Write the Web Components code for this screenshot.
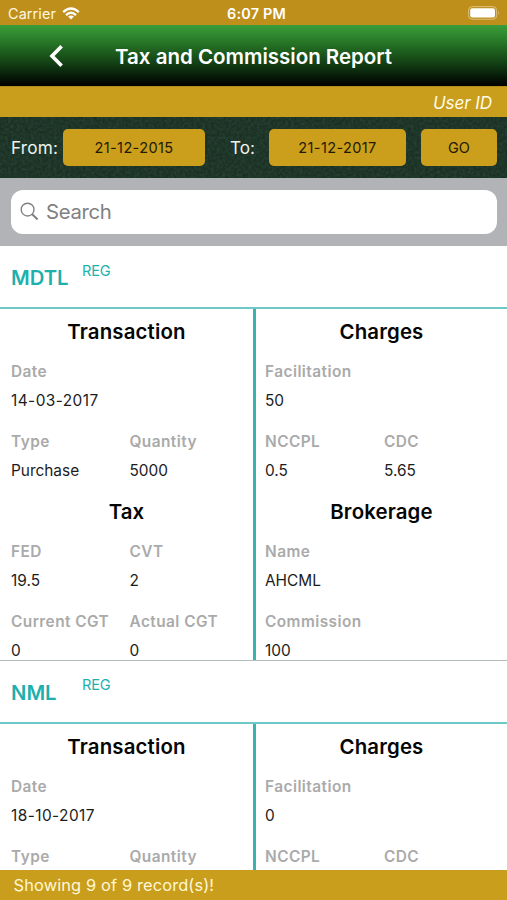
<!DOCTYPE html>
<html lang="en">
<head>
<meta charset="utf-8">
<title>Tax and Commission Report</title>
<style>
html,body{margin:0;height:100%;overflow:hidden;background:#fff}
body{font-family:Inter,"Liberation Sans",sans-serif}
</style>
</head>
<body>
<report-app></report-app>
<script>
function define(name, render) {
  customElements.define(name, class extends HTMLElement {
    connectedCallback() {
      if (this.shadowRoot) return;
      this.attachShadow({ mode: 'open' }).innerHTML = render(this);
    }
  });
}

define('status-bar', () => `
<style>
:host{display:grid;grid-template-columns:1fr auto 1fr;align-items:center;height:25px;background:#be8f1b;color:#fff8e0;font-size:14.4px;line-height:25px;padding:2px 7px 0 8px;box-sizing:border-box}
.l{display:flex;align-items:center;gap:6px;letter-spacing:.12px}
.c{font-weight:600;letter-spacing:.2px;color:#fff;padding-left:5px}
.r{display:flex;justify-content:flex-end}
svg{display:block}
.r svg{margin-top:-2px}
.l svg{margin-top:-2px}
.l span,.c{margin-top:-1px}
</style>
<div class="l"><span>Carrier</span>
<svg width="18" height="13" viewBox="0 0 18 13"><g fill="none" stroke="#fff" stroke-width="2.3"><path d="M1.2 5.1Q9-2.2 16.8 5.1"/><path d="M4 8.1Q9 3.4 14 8.1"/></g><path d="M9 12.6L6.1 9.6Q9 7.4 11.9 9.6Z" fill="#fff"/></svg></div>
<span class="c">6:07 PM</span>
<div class="r"><svg width="32" height="14" viewBox="0 0 32 14"><rect x=".6" y=".6" width="28" height="12.6" rx="3.6" fill="none" stroke="#ddc17d" stroke-width="1"/><rect x="2.2" y="2.2" width="24.8" height="9.4" rx="2" fill="#fff"/><path d="M30 4.8q1.6 2 0 4z" fill="#ddc17d"/></svg></div>`);

define('nav-bar', () => `
<style>
:host{display:grid;grid-template-columns:115px 1fr 115px;align-items:center;height:61px;background:linear-gradient(#3c9d3b 0,#2c832c 20%,#1b571b 48%,#0c2b0e 75%,#010401 97%,#000 100%);color:#fff}
svg{display:block;margin-left:48px}
h1{margin:0;font-size:20.5px;font-weight:600;text-align:center;white-space:nowrap;letter-spacing:0;line-height:28px;padding-top:2px}
</style>
<svg width="16" height="24" viewBox="0 0 16 24"><path d="M13.6 2.3L4 12L13.6 21.7" fill="none" stroke="#fff" stroke-width="3.6"/></svg>
<h1><slot></slot></h1>`);

define('user-strip', () => `
<style>
:host{display:flex;justify-content:flex-end;align-items:center;height:31px;box-sizing:border-box;padding:1px 15px 0 0;background:#c99e1c;border-top:1px solid #b48d20;color:#fffbe8;font-size:17.1px;font-style:italic;letter-spacing:-.1px}
</style><slot></slot>`);

define('gold-button', () => `
<style>
:host{display:flex;align-items:center;justify-content:center;height:37px;border-radius:5px;background:#cb9e1c;color:#211a04;font-size:14.5px;box-sizing:border-box;padding-bottom:1px}
</style><slot></slot>`);

define('filter-bar', () => `
<style>
:host{display:grid;height:61px;background:#193023;color:#eef2ee;font-size:17.2px;overflow:hidden}
svg,.row{grid-area:1/1}
svg{width:100%;height:61px}
.row{display:flex;align-items:center;padding:0 10px 0 11px;z-index:1}
.from{width:52px;white-space:nowrap;letter-spacing:.2px}
.to{width:39px;margin-left:25px}
.a{width:142px;letter-spacing:.4px}.b{width:137px;letter-spacing:.4px}.c{width:76px;margin-left:15px}
</style>
<svg><filter id="grain"><feTurbulence type="fractalNoise" baseFrequency=".35" numOctaves="2" seed="4"/><feColorMatrix values="0 0 0 0 .2  0 0 0 0 .36  0 0 0 0 .27  .9 0 0 0 -.25"/></filter><rect width="100%" height="100%" filter="url(#grain)" opacity=".3"/></svg>
<div class="row"><span class="from">From:</span><gold-button class="a">21-12-2015</gold-button><span class="to">To:</span><gold-button class="b">21-12-2017</gold-button><gold-button class="c">GO</gold-button></div>`);

define('search-bar', () => `
<style>
:host{display:block;height:68px;box-sizing:border-box;padding:12px 10px 12px 11px;background:#b1b3b7}
.field{display:flex;align-items:center;height:44px;box-sizing:border-box;gap:7px;padding:0 9px 1px;border-radius:12px;background:#fff;color:#808083;font-size:20.3px;letter-spacing:-.3px}
svg{display:block}
</style>
<div class="field"><svg width="19" height="19" viewBox="0 0 19 19" fill="none" stroke="#808083"><circle cx="7.6" cy="7.6" r="6.4" stroke-width="1.4"/><path d="M12.2 12.2L17.6 17.5" stroke-width="2"/></svg><slot></slot></div>`);

define('data-field', el => `
<style>
:host{display:block;height:70px;white-space:nowrap;font-size:15.4px}
.k{color:#aaa;font-weight:600;line-height:35px;height:34px;letter-spacing:.45px}
.v{color:#1c1c1c;line-height:25px}
:host([date]) .v{letter-spacing:.45px}
</style><div class="k">${el.getAttribute('label')}</div><div class="v"><slot></slot></div>`);

define('section-title', () => `
<style>
:host{display:block;grid-column:1/-1;height:40px;line-height:35px;font-size:20.4px;font-weight:600;color:#050505;text-align:center;letter-spacing:.15px}
</style><slot></slot>`);

define('trade-record', el => `
<style>
:host{display:block}
header{display:flex;height:61px;color:#1eb0ac}
:host(:not(:first-child)) header{height:60.4px}
:host(:not(:first-child)) .mkt{line-height:48px}
.sym{width:71px;padding-left:11px;font-size:20.3px;font-weight:600;line-height:64px}
.mkt{font-size:14.6px;line-height:50px;letter-spacing:-.2px}
.body{display:grid;grid-template-columns:253px 3px 251px;height:351px;border-top:2px solid #6cc9c5;border-bottom:1px solid #b4bcbc;padding-bottom:.4px;overflow:hidden}
.bar{background:#3cb2af;margin-bottom:-.4px}
</style>
<header><span class="sym">${el.getAttribute('symbol')}</span><span class="mkt">REG</span></header>
<div class="body"><slot name="left"></slot><div class="bar"></div><slot name="right"></slot></div>`);

define('record-column', () => `
<style>
:host{display:grid;padding:5px 0 0;grid-template-columns:129.5px 1fr;grid-auto-rows:min-content}
:host([slot=right]){grid-template-columns:128px 1fr}
::slotted(.first){padding-left:11px}
:host([slot=right]) ::slotted(.first){padding-left:9px}
::slotted(.wide){grid-column:1/-1}
</style><slot></slot>`);

define('footer-bar', () => `
<style>
:host{display:block;height:30px;padding-left:13.5px;background:#c99e1c;color:#fff7d6;font-size:16.4px;letter-spacing:.13px;line-height:31px;box-sizing:border-box}
</style><slot></slot>`);

define('report-app', () => {
  const f = (label, value, cls = '') => `<data-field class="${cls}" ${label === 'Date' ? 'date' : ''} label="${label}">${value}</data-field>`;
  const t = s => `<section-title>${s}</section-title>`;
  const record = r => `<trade-record symbol="${r.symbol}">
    <record-column slot="left">${t('Transaction')}${f('Date', r.date, 'first wide')}${r.full ? f('Type', 'Purchase', 'first') + f('Quantity', '5000') + t('Tax') + f('FED', '19.5', 'first') + f('CVT', '2') + f('Current CGT', '0', 'first') + f('Actual CGT', '0') : f('Type', '', 'first') + f('Quantity', '')}</record-column>
    <record-column slot="right">${t('Charges')}${f('Facilitation', r.facilitation, 'first wide')}${r.full ? f('NCCPL', '0.5', 'first') + f('CDC', '5.65') + t('Brokerage') + f('Name', 'AHCML', 'first wide') + f('Commission', '100', 'first wide') : f('NCCPL', '', 'first') + f('CDC', '')}</record-column>
  </trade-record>`;
  return `
<style>
:host{display:flex;flex-direction:column;width:507px;height:900px;overflow:hidden}
status-bar,nav-bar,user-strip,filter-bar,search-bar,footer-bar{flex:none}
main{flex:1 1 0;min-height:0;overflow:hidden;background:#fff}
</style>
<status-bar></status-bar>
<nav-bar>Tax and Commission Report</nav-bar>
<user-strip>User ID</user-strip>
<filter-bar></filter-bar>
<search-bar>Search</search-bar>
<main>${record({ symbol: 'MDTL', date: '14-03-2017', facilitation: '50', full: true })}${record({ symbol: 'NML', date: '18-10-2017', facilitation: '0', full: false })}</main>
<footer-bar>Showing 9 of 9 record(s)!</footer-bar>`;
});
</script>
</body>
</html>
